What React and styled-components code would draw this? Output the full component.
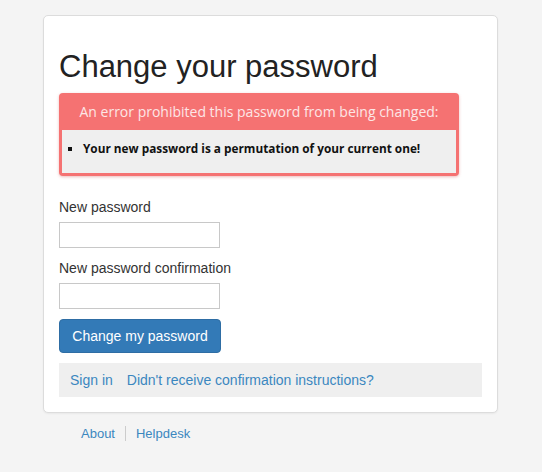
import styled, { createGlobalStyle } from "styled-components"

const Global = createGlobalStyle`
  body {
    margin: 0;
    background: #f4f4f4;
    font-family: "Liberation Sans", Arial, sans-serif;
    color: #333;
  }
`

const App = () => {
  return (
    <>
      <Global />
      <Page>
        <Card>
          <Title>Change your password</Title>
          <ErrorBox>
            <ErrorHead>An error prohibited this password from being changed:</ErrorHead>
            <ErrorList>
              <li>Your new password is a permutation of your current one!</li>
            </ErrorList>
          </ErrorBox>

          <Field>
            <Label>New password</Label>
            <Input type="password" />
          </Field>
          <Field>
            <Label>New password confirmation</Label>
            <Input type="password" />
          </Field>

          <Submit>Change my password</Submit>

          <LinkBar>
            <A href="#">Sign in</A>
            <A href="#">Didn't receive confirmation instructions?</A>
          </LinkBar>
        </Card>

        <Footer>
          <A href="#">About</A>
          <Sep />
          <A href="#">Helpdesk</A>
        </Footer>
      </Page>
    </>
  )
}

export default App

const Page = styled.div`
  width: 542px;
  height: 472px;
  padding: 15px 0 0 43px;
  box-sizing: border-box;
`

const Card = styled.div`
  width: 455px;
  box-sizing: border-box;
  background: #fff;
  border: 1px solid #dcdcdc;
  border-radius: 5px;
  padding: 33px 15px 15px 15px;
  box-shadow: 0 1px 2px rgba(0, 0, 0, 0.05);
`

const Title = styled.h1`
  margin: 0 0 8px 0;
  font-size: 31px;
  font-weight: 400;
  line-height: 36px;
  color: #222;
`

const ErrorBox = styled.div`
  width: 400px;
  box-sizing: border-box;
  background: #f57272;
  border-radius: 4px;
  padding: 0 3px 3px 3px;
  box-shadow: 0 1px 3px rgba(200, 60, 60, 0.35);
  margin-bottom: 21px;
`

const ErrorHead = styled.div`
  font-family: "Open Sans", sans-serif;
  color: #fde6e6;
  font-size: 14px;
  line-height: 37px;
  height: 37px;
  text-align: center;
`

const ErrorList = styled.ul`
  margin: 0;
  background: #efefef;
  padding: 9px 10px 16px 21px;
  list-style: square;
  font-family: "Open Sans", sans-serif;
  font-weight: 700;
  font-size: 11.8px;
  line-height: 18px;
  color: #111;
`

const Field = styled.div`
  display: flex;
  flex-direction: column;
  align-items: flex-start;
  margin-bottom: 10px;
`

const Label = styled.label`
  font-size: 14px;
  line-height: 20px;
  color: #333;
  margin-bottom: 5px;
`

const Input = styled.input`
  width: 161px;
  height: 26px;
  box-sizing: border-box;
  border: 1px solid #c8c8c8;
  background: #fff;
  margin: 0;
`

const Submit = styled.button`
  display: block;
  width: 162px;
  height: 34px;
  background: #337ab7;
  border: 1px solid #2e6da4;
  border-radius: 4px;
  color: #fff;
  font-family: "Liberation Sans", Arial, sans-serif;
  font-size: 14px;
`

const LinkBar = styled.div`
  display: flex;
  gap: 14px;
  margin-top: 10px;
  background: #efefef;
  height: 34px;
  align-items: center;
  padding: 0 11px;
  font-size: 14px;
`

const A = styled.a`
  color: #3b87bf;
  text-decoration: none;
`

const Footer = styled.div`
  display: flex;
  align-items: center;
  gap: 10px;
  padding: 13px 0 0 38px;
  font-size: 13px;
`

const Sep = styled.span`
  width: 1px;
  height: 15px;
  background: #ccc;
`
